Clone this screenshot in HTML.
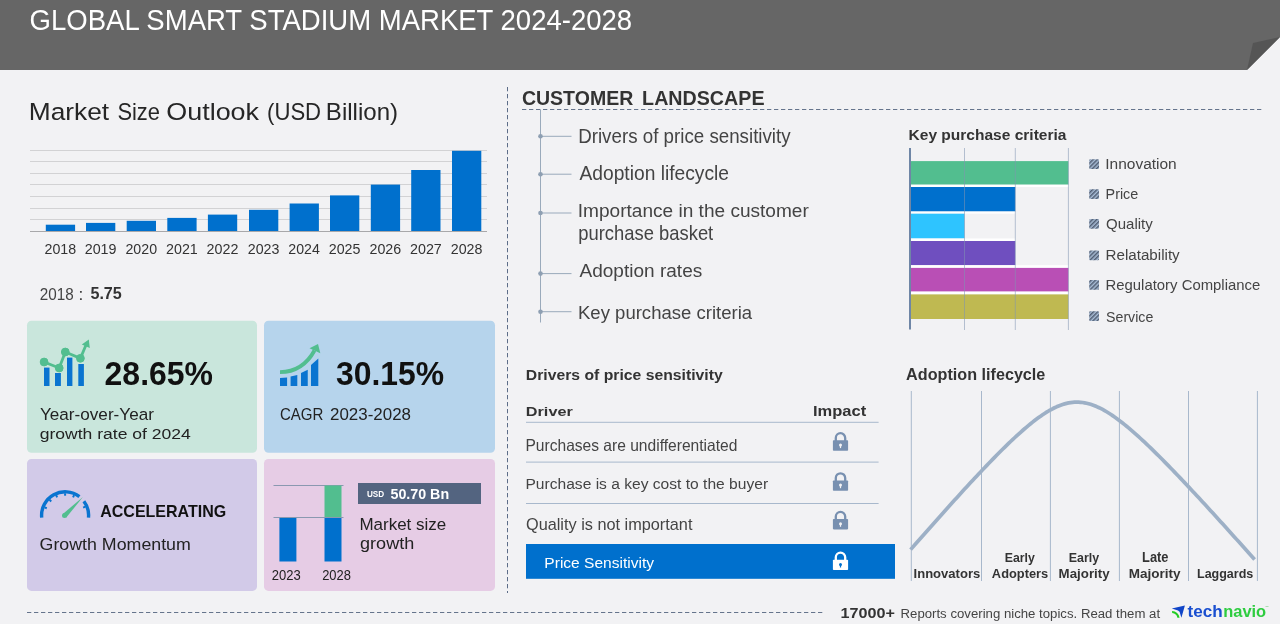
<!DOCTYPE html>
<html><head><meta charset="utf-8"><style>
*{margin:0;padding:0}
html,body{width:1280px;height:624px;overflow:hidden;background:#f2f2f4}
svg{display:block;will-change:transform;font-family:"Liberation Sans",sans-serif}
</style></head><body>
<svg width="1280" height="624" viewBox="0 0 1280 624">
<rect x="0" y="0" width="1280" height="624" fill="#f2f2f4"/><polygon points="0,0 1280,0 1280,37 1247,70 0,70" fill="#666666"/><polygon points="1247,70 1253,43 1280,37" fill="#555555"/><text x="29.62" y="30.00" font-size="28.57" fill="#ffffff" font-weight="normal" textLength="602.55" lengthAdjust="spacingAndGlyphs">GLOBAL SMART STADIUM MARKET 2024-2028</text>
<text x="28.80" y="120.30" font-size="23.72" fill="#262626" font-weight="normal" textLength="80.37" lengthAdjust="spacingAndGlyphs">Market</text>
<text x="117.42" y="120.30" font-size="23.72" fill="#262626" font-weight="normal" textLength="42.58" lengthAdjust="spacingAndGlyphs">Size</text>
<text x="166.29" y="120.30" font-size="23.72" fill="#262626" font-weight="normal" textLength="92.75" lengthAdjust="spacingAndGlyphs">Outlook</text>
<text x="267.07" y="120.30" font-size="23.72" fill="#262626" font-weight="normal" textLength="54.02" lengthAdjust="spacingAndGlyphs">(USD</text>
<text x="325.88" y="120.30" font-size="23.72" fill="#262626" font-weight="normal" textLength="72.20" lengthAdjust="spacingAndGlyphs">Billion)</text>
<rect x="30" y="150" width="457" height="1" fill="#d2d2d4"/><rect x="30" y="161" width="457" height="1" fill="#d2d2d4"/><rect x="30" y="173" width="457" height="1" fill="#d2d2d4"/><rect x="30" y="184" width="457" height="1" fill="#d2d2d4"/><rect x="30" y="196" width="457" height="1" fill="#d2d2d4"/><rect x="30" y="208" width="457" height="1" fill="#d2d2d4"/><rect x="30" y="219" width="457" height="1" fill="#d2d2d4"/><rect x="45.8" y="224.7" width="29.3" height="6.3" fill="#0070cd"/><rect x="86.0" y="222.9" width="29.3" height="8.1" fill="#0070cd"/><rect x="126.7" y="220.8" width="29.3" height="10.2" fill="#0070cd"/><rect x="167.3" y="217.9" width="29.3" height="13.1" fill="#0070cd"/><rect x="207.9" y="214.6" width="29.3" height="16.4" fill="#0070cd"/><rect x="249.0" y="209.8" width="29.3" height="21.2" fill="#0070cd"/><rect x="289.6" y="203.5" width="29.3" height="27.5" fill="#0070cd"/><rect x="330.0" y="195.4" width="29.3" height="35.6" fill="#0070cd"/><rect x="370.8" y="184.6" width="29.3" height="46.4" fill="#0070cd"/><rect x="411.2" y="170.0" width="29.3" height="61.0" fill="#0070cd"/><rect x="452.0" y="150.8" width="29.3" height="80.2" fill="#0070cd"/><rect x="30" y="231" width="457" height="1" fill="#a8a8aa"/><text x="44.54" y="253.90" font-size="14.00" fill="#333333" font-weight="normal" textLength="31.68" lengthAdjust="spacingAndGlyphs">2018</text>
<text x="84.74" y="253.90" font-size="14.00" fill="#333333" font-weight="normal" textLength="31.75" lengthAdjust="spacingAndGlyphs">2019</text>
<text x="125.44" y="253.90" font-size="14.00" fill="#333333" font-weight="normal" textLength="31.60" lengthAdjust="spacingAndGlyphs">2020</text>
<text x="166.04" y="253.90" font-size="14.00" fill="#333333" font-weight="normal" textLength="31.75" lengthAdjust="spacingAndGlyphs">2021</text>
<text x="206.63" y="253.90" font-size="14.00" fill="#333333" font-weight="normal" textLength="31.83" lengthAdjust="spacingAndGlyphs">2022</text>
<text x="247.74" y="253.90" font-size="14.00" fill="#333333" font-weight="normal" textLength="31.68" lengthAdjust="spacingAndGlyphs">2023</text>
<text x="288.34" y="253.90" font-size="14.00" fill="#333333" font-weight="normal" textLength="31.53" lengthAdjust="spacingAndGlyphs">2024</text>
<text x="328.74" y="253.90" font-size="14.00" fill="#333333" font-weight="normal" textLength="31.68" lengthAdjust="spacingAndGlyphs">2025</text>
<text x="369.54" y="253.90" font-size="14.00" fill="#333333" font-weight="normal" textLength="31.68" lengthAdjust="spacingAndGlyphs">2026</text>
<text x="409.98" y="253.90" font-size="14.00" fill="#333333" font-weight="normal" textLength="31.83" lengthAdjust="spacingAndGlyphs">2027</text>
<text x="450.74" y="253.90" font-size="14.00" fill="#333333" font-weight="normal" textLength="31.68" lengthAdjust="spacingAndGlyphs">2028</text>
<text x="39.74" y="299.90" font-size="16.14" fill="#444444" font-weight="normal" textLength="33.87" lengthAdjust="spacingAndGlyphs">2018</text>
<text x="78.29" y="299.90" font-size="15.85" fill="#444444" font-weight="normal" textLength="5.26" lengthAdjust="spacingAndGlyphs">:</text>
<text x="90.42" y="299.00" font-size="16.23" fill="#333333" font-weight="bold" textLength="31.41" lengthAdjust="spacingAndGlyphs">5.75</text>
<rect x="27" y="320.8" width="230" height="131.9" rx="4.5" fill="#c9e6dc"/><rect x="264" y="320.8" width="231" height="131.9" rx="4.5" fill="#b6d4ec"/><rect x="27" y="459" width="230" height="131.9" rx="4.5" fill="#d2cae8"/><rect x="264" y="459" width="231" height="131.9" rx="4.5" fill="#e6cce5"/><text x="104.58" y="385.00" font-size="33.29" fill="#111111" font-weight="bold" textLength="108.41" lengthAdjust="spacingAndGlyphs">28.65%</text>
<text x="39.97" y="419.60" font-size="16.23" fill="#222222" font-weight="normal" textLength="113.93" lengthAdjust="spacingAndGlyphs">Year-over-Year</text>
<text x="39.70" y="439.30" font-size="15.45" fill="#222222" font-weight="normal" textLength="151.16" lengthAdjust="spacingAndGlyphs">growth rate of 2024</text>
<text x="336.00" y="385.20" font-size="33.29" fill="#111111" font-weight="bold" textLength="108.09" lengthAdjust="spacingAndGlyphs">30.15%</text>
<text x="279.95" y="419.80" font-size="16.43" fill="#222222" font-weight="normal" textLength="43.49" lengthAdjust="spacingAndGlyphs">CAGR</text>
<text x="330.05" y="419.80" font-size="16.43" fill="#222222" font-weight="normal" textLength="80.96" lengthAdjust="spacingAndGlyphs">2023-2028</text>
<text x="100.20" y="516.90" font-size="16.71" fill="#111111" font-weight="bold" textLength="126.07" lengthAdjust="spacingAndGlyphs">ACCELERATING</text>
<text x="39.61" y="550.00" font-size="16.00" fill="#222222" font-weight="normal" textLength="151.20" lengthAdjust="spacingAndGlyphs">Growth Momentum</text>
<rect x="358" y="483" width="123" height="21" fill="#536480"/><text x="366.91" y="497.00" font-size="9.71" fill="#ffffff" font-weight="bold" textLength="17.23" lengthAdjust="spacingAndGlyphs">USD</text>
<text x="390.47" y="498.90" font-size="14.79" fill="#ffffff" font-weight="bold" textLength="58.66" lengthAdjust="spacingAndGlyphs">50.70 Bn</text>
<text x="359.44" y="529.70" font-size="15.59" fill="#222222" font-weight="normal" textLength="86.76" lengthAdjust="spacingAndGlyphs">Market size</text>
<text x="360.08" y="549.20" font-size="16.00" fill="#222222" font-weight="normal" textLength="54.12" lengthAdjust="spacingAndGlyphs">growth</text>
<rect x="273.5" y="485" width="70" height="1" fill="#8a98b0"/><rect x="279.4" y="517" width="17" height="44.5" fill="#0070cd"/><rect x="324.5" y="485.5" width="17" height="31.5" fill="#52be8f"/><rect x="324.5" y="517" width="17" height="44.5" fill="#0070cd"/><rect x="273.5" y="517" width="70" height="1" fill="#8a98b0"/><text x="271.75" y="580.10" font-size="13.71" fill="#222222" font-weight="normal" textLength="28.97" lengthAdjust="spacingAndGlyphs">2023</text>
<text x="322.15" y="580.10" font-size="13.71" fill="#222222" font-weight="normal" textLength="28.76" lengthAdjust="spacingAndGlyphs">2028</text>
<g fill="#0a74d0"><rect x="44" y="367.6" width="5.5" height="18.4"/><rect x="55" y="373" width="5.9" height="13"/><rect x="67" y="357.6" width="5.4" height="28.4"/><rect x="78.3" y="364" width="5.6" height="22"/></g><g fill="#52be8f" stroke="#52be8f"><polyline points="44.1,362 59.2,368 65.3,352 80.4,358.3 86,345" fill="none" stroke-width="2.8"/><circle cx="44.1" cy="362" r="3.9"/><circle cx="59.2" cy="368" r="3.9"/><circle cx="65.3" cy="352" r="3.9"/><circle cx="80.4" cy="358.3" r="3.9"/><polygon points="88.8,339.6 81.8,344.6 89.8,348" stroke="none"/></g><g fill="#0a74d0"><polygon points="280,378 287.1,377.5 287.1,386 280,386"/><polygon points="290.6,376.5 297.3,374.9 297.3,386 290.6,386"/><polygon points="301,373 307.75,369.7 307.75,386 301,386"/><polygon points="311,365 318.3,358.4 318.3,386 311,386"/></g><path d="M280,372.2 C293,372 306,366 314.5,350.5" fill="none" stroke="#52be8f" stroke-width="3.8"/><polygon points="318,344 309.5,348.3 320.3,353.2" fill="#52be8f"/><path d="M41.71,517.55 A23.5,23.5 0 0 1 79.41,496.66" fill="none" stroke="#0a74d0" stroke-width="3.4"/><path d="M83.87,501.16 A23.5,23.5 0 0 1 88.49,517.55" fill="none" stroke="#0a74d0" stroke-width="3.4"/><line x1="44.56" y1="507.42" x2="46.80" y2="508.28" stroke="#0a74d0" stroke-width="2"/><line x1="49.54" y1="499.74" x2="51.24" y2="501.44" stroke="#0a74d0" stroke-width="2"/><line x1="56.15" y1="495.20" x2="57.13" y2="497.39" stroke="#0a74d0" stroke-width="2"/><line x1="65.10" y1="493.30" x2="65.10" y2="495.70" stroke="#0a74d0" stroke-width="2"/><line x1="74.05" y1="495.20" x2="73.07" y2="497.39" stroke="#0a74d0" stroke-width="2"/><line x1="85.35" y1="506.70" x2="83.14" y2="507.64" stroke="#0a74d0" stroke-width="2"/><polygon points="62.8,514 82.9,497 66.3,517.6" fill="#52be8f"/><circle cx="64.5" cy="515.6" r="2.5" fill="#52be8f"/><line x1="507.5" y1="87" x2="507.5" y2="593" stroke="#5d6d88" stroke-width="1" stroke-dasharray="4.3,2.7"/><line x1="27" y1="612.5" x2="823" y2="612.5" stroke="#65748c" stroke-width="1" stroke-dasharray="4.3,2.7"/><line x1="522" y1="109.5" x2="1262" y2="109.5" stroke="#65748c" stroke-width="1" stroke-dasharray="4.3,2.7"/><text x="521.92" y="105.40" font-size="20.43" fill="#333333" font-weight="bold" textLength="111.36" lengthAdjust="spacingAndGlyphs">CUSTOMER</text>
<text x="642.12" y="105.40" font-size="20.43" fill="#333333" font-weight="bold" textLength="122.42" lengthAdjust="spacingAndGlyphs">LANDSCAPE</text>
<rect x="540" y="109.5" width="1" height="213" fill="#9aaabb"/><rect x="540.5" y="135.8" width="31" height="1" fill="#9aaabb"/><circle cx="540.5" cy="136.3" r="2.3" fill="#8e9fb2"/><rect x="540.5" y="173.7" width="31" height="1" fill="#9aaabb"/><circle cx="540.5" cy="174.2" r="2.3" fill="#8e9fb2"/><rect x="540.5" y="212.5" width="31" height="1" fill="#9aaabb"/><circle cx="540.5" cy="213.0" r="2.3" fill="#8e9fb2"/><rect x="540.5" y="273.1" width="31" height="1" fill="#9aaabb"/><circle cx="540.5" cy="273.6" r="2.3" fill="#8e9fb2"/><rect x="540.5" y="311.2" width="31" height="1" fill="#9aaabb"/><circle cx="540.5" cy="311.7" r="2.3" fill="#8e9fb2"/><text x="578.20" y="142.70" font-size="19.31" fill="#444444" font-weight="normal" textLength="212.42" lengthAdjust="spacingAndGlyphs">Drivers of price sensitivity</text>
<text x="579.50" y="180.40" font-size="19.86" fill="#444444" font-weight="normal" textLength="149.51" lengthAdjust="spacingAndGlyphs">Adoption lifecycle</text>
<text x="577.78" y="217.20" font-size="18.76" fill="#444444" font-weight="normal" textLength="231.04" lengthAdjust="spacingAndGlyphs">Importance in the customer</text>
<text x="578.30" y="240.40" font-size="19.59" fill="#444444" font-weight="normal" textLength="134.94" lengthAdjust="spacingAndGlyphs">purchase basket</text>
<text x="579.50" y="277.20" font-size="18.76" fill="#444444" font-weight="normal" textLength="122.75" lengthAdjust="spacingAndGlyphs">Adoption rates</text>
<text x="578.02" y="319.40" font-size="18.76" fill="#444444" font-weight="normal" textLength="174.04" lengthAdjust="spacingAndGlyphs">Key purchase criteria</text>
<text x="908.59" y="139.70" font-size="15.17" fill="#333333" font-weight="bold" textLength="157.89" lengthAdjust="spacingAndGlyphs">Key purchase criteria</text>
<rect x="911" y="161.1" width="157.4" height="23.6" fill="#52be8f"/><rect x="911" y="184.7" width="157.4" height="2.3" fill="#ffffff"/><rect x="911" y="187" width="104.3" height="24.5" fill="#0070cd"/><rect x="911" y="211.5" width="104.3" height="2.2" fill="#ffffff"/><rect x="911" y="213.7" width="53.5" height="24.8" fill="#2ec4ff"/><rect x="911" y="238.5" width="104.3" height="2.5" fill="#ffffff"/><rect x="911" y="241" width="104.3" height="24.2" fill="#6f4fbf"/><rect x="911" y="265.2" width="157.4" height="2.7" fill="#ffffff"/><rect x="911" y="267.9" width="157.4" height="23.7" fill="#b94fb5"/><rect x="911" y="291.6" width="157.4" height="2.8" fill="#ffffff"/><rect x="911" y="294.4" width="157.4" height="24.6" fill="#bfb951"/><rect x="964.0" y="148" width="1" height="182" fill="#7f94b0" fill-opacity="0.55"/><rect x="1014.8" y="148" width="1" height="182" fill="#7f94b0" fill-opacity="0.55"/><rect x="1067.9" y="148" width="1" height="182" fill="#7f94b0" fill-opacity="0.55"/><rect x="909" y="148" width="2" height="181.5" fill="#6f86a6"/><defs><pattern id="hp" width="3" height="3" patternUnits="userSpaceOnUse" patternTransform="rotate(45)"><rect width="3" height="3" fill="#a9bdd6"/><rect width="1.5" height="3" fill="#505d72"/></pattern></defs><rect x="1089.2" y="159.2" width="9.8" height="9.8" rx="1" fill="url(#hp)"/><text x="1105.31" y="169.00" font-size="14.90" fill="#444444" font-weight="normal" textLength="71.40" lengthAdjust="spacingAndGlyphs">Innovation</text>
<rect x="1089.2" y="189.3" width="9.8" height="9.8" rx="1" fill="url(#hp)"/><text x="1105.55" y="199.00" font-size="14.76" fill="#444444" font-weight="normal" textLength="32.75" lengthAdjust="spacingAndGlyphs">Price</text>
<rect x="1089.2" y="219" width="9.8" height="9.8" rx="1" fill="url(#hp)"/><text x="1106.02" y="229.40" font-size="14.34" fill="#444444" font-weight="normal" textLength="46.71" lengthAdjust="spacingAndGlyphs">Quality</text>
<rect x="1089.2" y="250.4" width="9.8" height="9.8" rx="1" fill="url(#hp)"/><text x="1105.49" y="259.70" font-size="14.90" fill="#444444" font-weight="normal" textLength="74.23" lengthAdjust="spacingAndGlyphs">Relatability</text>
<rect x="1089.2" y="280" width="9.8" height="9.8" rx="1" fill="url(#hp)"/><text x="1105.51" y="289.70" font-size="14.34" fill="#444444" font-weight="normal" textLength="154.75" lengthAdjust="spacingAndGlyphs">Regulatory Compliance</text>
<rect x="1089.2" y="311.2" width="9.8" height="9.8" rx="1" fill="url(#hp)"/><text x="1106.06" y="321.60" font-size="14.34" fill="#444444" font-weight="normal" textLength="47.27" lengthAdjust="spacingAndGlyphs">Service</text>
<text x="525.88" y="380.00" font-size="15.17" fill="#333333" font-weight="bold" textLength="196.81" lengthAdjust="spacingAndGlyphs">Drivers of price sensitivity</text>
<text x="525.85" y="415.80" font-size="13.66" fill="#333333" font-weight="bold" textLength="46.91" lengthAdjust="spacingAndGlyphs">Driver</text>
<text x="813.03" y="415.80" font-size="15.36" fill="#333333" font-weight="bold" textLength="53.19" lengthAdjust="spacingAndGlyphs">Impact</text>
<rect x="526" y="421.8" width="352.6" height="1" fill="#a8b8cc"/><rect x="526" y="461.6" width="352.6" height="1" fill="#a8b8cc"/><rect x="526" y="503.0" width="352.6" height="1" fill="#a8b8cc"/><text x="525.45" y="450.90" font-size="16.28" fill="#444444" font-weight="normal" textLength="211.89" lengthAdjust="spacingAndGlyphs">Purchases are undifferentiated</text>
<text x="525.45" y="489.30" font-size="15.45" fill="#444444" font-weight="normal" textLength="242.64" lengthAdjust="spacingAndGlyphs">Purchase is a key cost to the buyer</text>
<text x="525.97" y="529.50" font-size="16.14" fill="#444444" font-weight="normal" textLength="166.44" lengthAdjust="spacingAndGlyphs">Quality is not important</text>
<path d="M835.8,441.1 v-3.2 a4.7,4.7 0 0 1 9.4,0 v3.2" fill="none" stroke="#7890b0" stroke-width="2.3"/><rect x="832.9" y="440.3" width="15.2" height="10.4" rx="0.8" fill="#7890b0"/><circle cx="840.5" cy="445.0" r="1.5" fill="#f2f2f4"/><rect x="839.9" y="445.1" width="1.2" height="3" fill="#f2f2f4"/><path d="M835.8,481.2 v-3.2 a4.7,4.7 0 0 1 9.4,0 v3.2" fill="none" stroke="#7890b0" stroke-width="2.3"/><rect x="832.9" y="480.4" width="15.2" height="10.4" rx="0.8" fill="#7890b0"/><circle cx="840.5" cy="485.09999999999997" r="1.5" fill="#f2f2f4"/><rect x="839.9" y="485.2" width="1.2" height="3" fill="#f2f2f4"/><path d="M835.8,519.8 v-3.2 a4.7,4.7 0 0 1 9.4,0 v3.2" fill="none" stroke="#7890b0" stroke-width="2.3"/><rect x="832.9" y="519.0" width="15.2" height="10.4" rx="0.8" fill="#7890b0"/><circle cx="840.5" cy="523.7" r="1.5" fill="#f2f2f4"/><rect x="839.9" y="523.8" width="1.2" height="3" fill="#f2f2f4"/><rect x="526" y="544" width="369" height="34.8" fill="#0070cd"/><text x="544.36" y="568.10" font-size="15.45" fill="#ffffff" font-weight="normal" textLength="109.61" lengthAdjust="spacingAndGlyphs">Price Sensitivity</text>
<path d="M835.8,560.5 v-3.2 a4.7,4.7 0 0 1 9.4,0 v3.2" fill="none" stroke="#ffffff" stroke-width="2.3"/><rect x="832.9" y="559.7" width="15.2" height="10.4" rx="0.8" fill="#ffffff"/><circle cx="840.5" cy="564.4" r="1.5" fill="#0070cd"/><rect x="839.9" y="564.5" width="1.2" height="3" fill="#0070cd"/><text x="906.10" y="380.00" font-size="15.86" fill="#333333" font-weight="bold" textLength="139.26" lengthAdjust="spacingAndGlyphs">Adoption lifecycle</text>
<rect x="910.8" y="391" width="1" height="190" fill="#a8b8cc"/><rect x="981.0" y="391" width="1" height="190" fill="#a8b8cc"/><rect x="1049.9" y="391" width="1" height="190" fill="#a8b8cc"/><rect x="1118.9" y="391" width="1" height="190" fill="#a8b8cc"/><rect x="1188.0" y="391" width="1" height="190" fill="#a8b8cc"/><rect x="1256.9" y="391" width="1" height="190" fill="#a8b8cc"/><polyline points="910.6,549.65 912.6,547.37 914.6,545.08 916.6,542.80 918.6,540.53 920.6,538.25 922.6,535.98 924.6,533.71 926.6,531.45 928.6,529.18 930.6,526.92 932.6,524.67 934.6,522.41 936.6,520.16 938.6,517.92 940.6,515.68 942.6,513.44 944.6,511.20 946.6,508.97 948.6,506.75 950.6,504.52 952.6,502.31 954.6,500.10 956.6,497.89 958.6,495.69 960.6,493.49 962.6,491.30 964.6,489.12 966.6,486.94 968.6,484.77 970.6,482.61 972.6,480.45 974.6,478.30 976.6,476.16 978.6,474.03 980.6,471.91 982.6,469.79 984.6,467.69 986.6,465.60 988.6,463.51 990.6,461.44 992.6,459.38 994.6,457.34 996.6,455.30 998.6,453.28 1000.6,451.28 1002.6,449.29 1004.6,447.32 1006.6,445.36 1008.6,443.43 1010.6,441.51 1012.6,439.61 1014.6,437.74 1016.6,435.89 1018.6,434.07 1020.6,432.27 1022.6,430.50 1024.6,428.76 1026.6,427.05 1028.6,425.37 1030.6,423.73 1032.6,422.13 1034.6,420.56 1036.6,419.04 1038.6,417.57 1040.6,416.14 1042.6,414.77 1044.6,413.45 1046.6,412.18 1048.6,410.97 1050.6,409.83 1052.6,408.76 1054.6,407.75 1056.6,406.82 1058.6,405.96 1060.6,405.18 1062.6,404.49 1064.6,403.88 1066.6,403.36 1068.6,402.92 1070.6,402.58 1072.6,402.34 1074.6,402.19 1076.6,402.13 1078.6,402.17 1080.6,402.30 1082.6,402.53 1084.6,402.84 1086.6,403.25 1088.6,403.75 1090.6,404.33 1092.6,405.00 1094.6,405.74 1096.6,406.57 1098.6,407.47 1100.6,408.44 1102.6,409.48 1104.6,410.59 1106.6,411.76 1108.6,412.99 1110.6,414.27 1112.6,415.61 1114.6,417.00 1116.6,418.43 1118.6,419.91 1120.6,421.43 1122.6,422.99 1124.6,424.59 1126.6,426.23 1128.6,427.89 1130.6,429.59 1132.6,431.32 1134.6,433.07 1136.6,434.86 1138.6,436.66 1140.6,438.49 1142.6,440.34 1144.6,442.21 1146.6,444.10 1148.6,446.01 1150.6,447.94 1152.6,449.88 1154.6,451.84 1156.6,453.81 1158.6,455.80 1160.6,457.80 1162.6,459.82 1164.6,461.84 1166.6,463.88 1168.6,465.92 1170.6,467.98 1172.6,470.05 1174.6,472.12 1176.6,474.21 1178.6,476.30 1180.6,478.40 1182.6,480.51 1184.6,482.62 1186.6,484.75 1188.6,486.87 1190.6,489.01 1192.6,491.15 1194.6,493.30 1196.6,495.45 1198.6,497.61 1200.6,499.77 1202.6,501.94 1204.6,504.11 1206.6,506.29 1208.6,508.47 1210.6,510.66 1212.6,512.85 1214.6,515.04 1216.6,517.24 1218.6,519.44 1220.6,521.64 1222.6,523.85 1224.6,526.06 1226.6,528.27 1228.6,530.49 1230.6,532.71 1232.6,534.93 1234.6,537.16 1236.6,539.38 1238.6,541.61 1240.6,543.84 1242.6,546.08 1244.6,548.32 1246.6,550.55 1248.6,552.80 1250.6,555.04 1252.6,557.28 1254.6,559.53" fill="none" stroke="#9db0c6" stroke-width="3.7" stroke-linejoin="round"/><text x="913.55" y="577.80" font-size="12.46" fill="#333333" font-weight="bold" textLength="66.70" lengthAdjust="spacingAndGlyphs">Innovators</text>
<text x="1004.70" y="561.90" font-size="13.66" fill="#333333" font-weight="bold" textLength="30.08" lengthAdjust="spacingAndGlyphs">Early</text>
<text x="991.88" y="577.80" font-size="11.86" fill="#333333" font-weight="bold" textLength="56.33" lengthAdjust="spacingAndGlyphs">Adopters</text>
<text x="1068.69" y="562.20" font-size="13.52" fill="#333333" font-weight="bold" textLength="30.39" lengthAdjust="spacingAndGlyphs">Early</text>
<text x="1058.64" y="577.80" font-size="11.86" fill="#333333" font-weight="bold" textLength="50.92" lengthAdjust="spacingAndGlyphs">Majority</text>
<text x="1142.07" y="562.20" font-size="14.20" fill="#333333" font-weight="bold" textLength="26.40" lengthAdjust="spacingAndGlyphs">Late</text>
<text x="1128.82" y="577.80" font-size="11.86" fill="#333333" font-weight="bold" textLength="51.83" lengthAdjust="spacingAndGlyphs">Majority</text>
<text x="1196.99" y="577.80" font-size="11.86" fill="#333333" font-weight="bold" textLength="56.33" lengthAdjust="spacingAndGlyphs">Laggards</text>
<text x="840.43" y="617.60" font-size="14.71" fill="#333333" font-weight="bold" textLength="54.41" lengthAdjust="spacingAndGlyphs">17000+</text>
<text x="900.54" y="617.80" font-size="11.86" fill="#444444" font-weight="normal" textLength="259.55" lengthAdjust="spacingAndGlyphs">Reports covering niche topics. Read them at</text>
<polygon points="1171.8,608.4 1184.9,605.4 1181.4,617.8 1179.6,611.8 1178,610.4" fill="#1045c8"/><path d="M1172,610.9 Q1178.4,611.2 1179.6,617.8 L1177.4,617.8 Q1176.6,613.6 1172.2,613.1Z" fill="#22cc22"/><text x="1187.63" y="617.30" font-size="16.55" fill="#1a4fd0" font-weight="bold" textLength="35.12" lengthAdjust="spacingAndGlyphs">tech</text>
<text x="1223.23" y="617.30" font-size="16.55" fill="#2ecc40" font-weight="bold" textLength="42.96" lengthAdjust="spacingAndGlyphs">navio</text>
<rect x="1265.5" y="606" width="3" height="0.8" fill="#9ad8a0"/></svg>
</body></html>
